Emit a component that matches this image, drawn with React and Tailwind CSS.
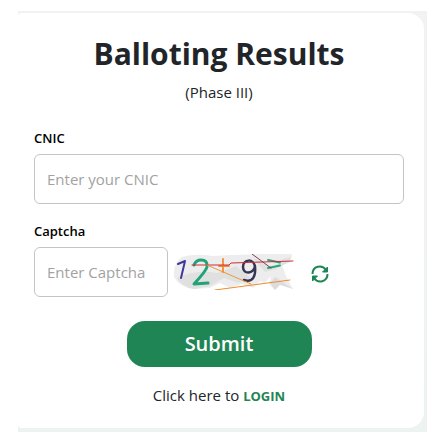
import { useState } from 'react';

const labelClass = 'block text-[13px] leading-5 font-semibold text-black';
const inputClass =
  'block h-[50px] w-full rounded-md border border-[#c4c4c4] bg-white px-3 text-[15px] text-[#212529] placeholder:text-[#a2a2a2] focus:outline-none focus:border-[#1f8554]';

const CaptchaImage = () => (
  <svg className="h-9 w-[120px] shrink-0" viewBox="0 0 120 36" role="img" aria-label="Captcha">
    {/* smudged background */}
    <path
      d="M8 3 Q22 -1 38 2 L58 1 L90 0 L118 0 L117 8 L108 11 L112 22 L119 35 L105 29 L101 36 L95 30 L97 22 L91 29 L86 27 L79 34 L68 30 L56 34 L46 29 L36 34 L20 35 Q5 33 0 23 Q-1 9 8 3Z"
      fill="#ededed"
    />
    <path d="M3 24 Q22 15 43 19 L62 12 L77 24 L64 29 L50 24 L36 32 L20 35 Q8 33 3 24Z" fill="#e0e0e0" />
    <path d="M78 3 L99 14 L109 5 L117 3 L115 8 L102 15 L91 18Z" fill="#e0e0e0" />
    <path d="M96 29 L101 23 L119 35 L106 31 L101 36Z" fill="#dcdcdc" />
    <g fill="none" strokeLinecap="round" strokeLinejoin="round">
      <path d="M4 10 L11 7 L7 24" stroke="#41379f" strokeWidth="2" />
      <path d="M20 11 Q22 6 27 6 Q34 6 33 13 Q32 17 20 30 L34 29" stroke="#20a377" strokeWidth="3" />
      <path d="M49 5 L49 18 M45 12 L55 12" stroke="#f28a32" strokeWidth="1.8" />
      <path
        d="M81 13 C80 4 69 5 69 13 C69 21 80 20 81 12 C82 22 79 29 70 26"
        stroke="#343653"
        strokeWidth="2.5"
      />
      <path d="M94 6 L106 8.500 M94 14 L106 11.500" stroke="#28a679" strokeWidth="1.8" />
      <path d="M18 11 L55 11 L57 9 L119 7" stroke="#cf2c3d" strokeWidth="1" />
      <path d="M33 11 L77 30" stroke="#e89b3c" strokeWidth="1" />
      <path d="M41 36 L116 26" stroke="#ed8c2c" strokeWidth="1" />
      <path d="M78 0 L97 14" stroke="#78434e" strokeWidth="1" />
    </g>
  </svg>
);

const RefreshIcon = () => (
  <svg
    className="h-5 w-5"
    viewBox="0 0 20 20"
    fill="none"
    stroke="#1f8554"
    strokeWidth="2"
    strokeLinejoin="round"
    aria-hidden="true"
  >
    <path d="M2.500 10 C2.500 2 12 0 16 6" />
    <path d="M17.500 10 C17.500 18 8 20 4 14" />
    <path d="M17.500 3 V8 H12.500 Z M2.500 17 V12 H7.500 Z" fill="#1f8554" strokeWidth="1" />
  </svg>
);

const App = () => {
  const [cnic, setCnic] = useState('');
  const [captcha, setCaptcha] = useState('');

  const handleSubmit = (event) => {
    event.preventDefault();
  };

  return (
    <div className="min-h-screen bg-white pt-[11px] pl-[18px] [font-family:'Open_Sans',sans-serif] text-[#212529]">
      <main className="bg-gradient-to-b from-[#f2f2f2] to-[#edf3f1] pt-0.5 pr-[3px] pb-1">
        <form
          onSubmit={handleSubmit}
          className="rounded-l rounded-r-2xl bg-white px-4 pt-[21px] pr-5 pb-5"
        >
          <h1 className="text-center text-[30px] leading-10 font-bold">Balloting Results</h1>
          <p className="mt-1.5 text-center text-[15px] leading-6">(Phase III)</p>

          <div className="mt-6">
            <label htmlFor="cnic" className={labelClass}>CNIC</label>
            <input
              id="cnic"
              type="text"
              value={cnic}
              onChange={(e) => setCnic(e.target.value)}
              placeholder="Enter your CNIC"
              className={`mt-1.5 ${inputClass}`}
            />
          </div>

          <div className="mt-[17px]">
            <label htmlFor="captcha" className={labelClass}>Captcha</label>
            <div className="mt-1.5 flex items-center">
              <div className="w-[134px] shrink-0">
                <input
                  id="captcha"
                  type="text"
                  value={captcha}
                  onChange={(e) => setCaptcha(e.target.value)}
                  placeholder="Enter Captcha"
                  className={inputClass}
                />
              </div>
              <div className="ml-1.5 flex items-center gap-4">
                <CaptchaImage />
                <button type="button" aria-label="Refresh captcha" className="cursor-pointer pt-1">
                  <RefreshIcon />
                </button>
              </div>
            </div>
          </div>

          <div className="mt-6 text-center">
            <button
              type="submit"
              className="block h-[46px] w-1/2 mx-auto cursor-pointer rounded-[18px] bg-[#1f8554] text-xl font-semibold text-white"
            >
              Submit
            </button>
            <p className="mt-4 text-[15px] leading-6">
              Click here to{' '}
              <a href="#login" className="text-[13px] font-bold text-[#1f8554]">LOGIN</a>
            </p>
          </div>
        </form>
      </main>
    </div>
  );
};

export default App;
